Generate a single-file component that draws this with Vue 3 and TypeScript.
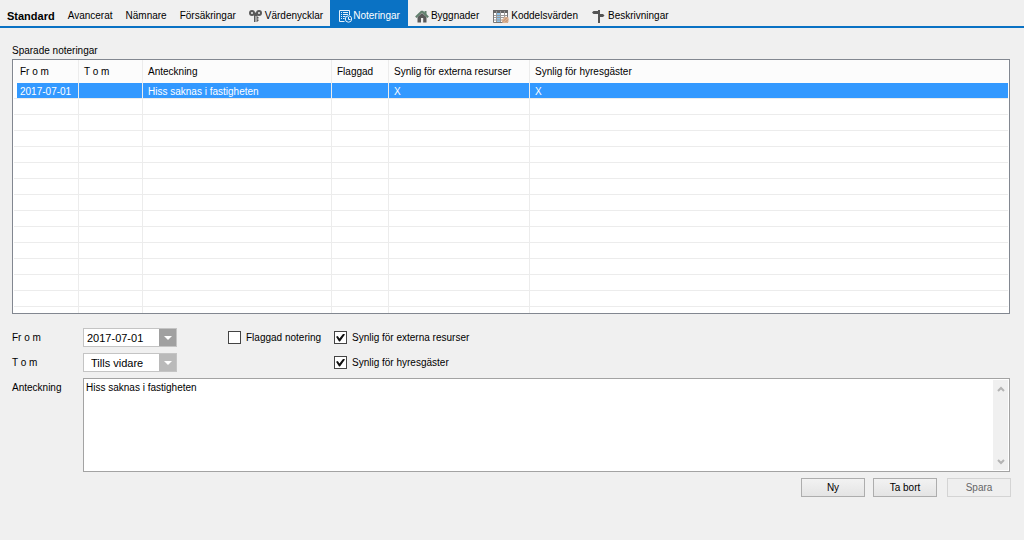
<script setup lang="ts">
import { ref } from 'vue'

interface Tab {
  label: string
  icon?: 'keys' | 'notes' | 'house' | 'grid' | 'sign'
}

interface Note {
  from: string
  to: string
  text: string
  flagged: string
  external: string
  tenants: string
}

const tabs: Tab[] = [
  { label: 'Standard' },
  { label: 'Avancerat' },
  { label: 'Nämnare' },
  { label: 'Försäkringar' },
  { label: 'Värdenycklar', icon: 'keys' },
  { label: 'Noteringar', icon: 'notes' },
  { label: 'Byggnader', icon: 'house' },
  { label: 'Koddelsvärden', icon: 'grid' },
  { label: 'Beskrivningar', icon: 'sign' },
]
const active = ref('Noteringar')

const columns = ['Fr o m', 'T o m', 'Anteckning', 'Flaggad', 'Synlig för externa resurser', 'Synlig för hyresgäster']
const notes: Note[] = [
  { from: '2017-07-01', to: '', text: 'Hiss saknas i fastigheten', flagged: '', external: 'X', tenants: 'X' },
]
const emptyRows = 14

const fromDate = ref('2017-07-01')
const toDate = ref('Tills vidare')
const flagged = ref(false)
const external = ref(true)
const tenants = ref(true)
const noteText = ref('Hiss saknas i fastigheten')
</script>

<template>
  <main class="window">
    <nav class="tabs">
      <button
        v-for="tab in tabs"
        :key="tab.label"
        type="button"
        class="tab"
        :class="{ active: tab.label === active, strong: tab.label === 'Standard', pictured: tab.icon }"
        @click="active = tab.label"
      >
        <svg v-if="tab.icon === 'keys'" class="icon" viewBox="0 0 14 14">
          <g fill="none" stroke="#5a5a5a" stroke-width="2">
            <circle cx="3" cy="4" r="2" />
            <circle cx="10" cy="4" r="2" />
          </g>
          <path d="M4.500 3.500h4V13H7.500V7H6.500v6H5V6z" fill="#5a5a5a" />
          <path d="M8 8h1.500v1.500H8zM8 10.500h1.500V12H8z" fill="#5a5a5a" />
        </svg>
        <svg v-else-if="tab.icon === 'notes'" class="icon" viewBox="0 0 14 14">
          <g fill="none" stroke="#e6f1fa" stroke-width="1">
            <path d="M5.500 12.500H.5V1.500h10V6" />
            <path d="M2 3.500h1M4 3.500h5M2 5.500h1M4 5.500h5M2 7.500h1M4 7.500h2.500M2 9.500h1M4 9.500h1.500" />
            <circle cx="9.500" cy="10" r="3.200" />
            <path d="M9.500 8v2.500h2" />
          </g>
        </svg>
        <svg v-else-if="tab.icon === 'house'" class="icon" viewBox="0 0 14 14">
          <path d="M2.500 8L7 4l4.500 4v5.500h-9z" fill="#5a5a5a" />
          <path d="M7 2.200L.8 8.300M7 2.200l6.200 6.100" fill="none" stroke="#62806e" stroke-width="2" />
          <path d="M9.500 2h2v4l-2-2z" fill="#62806e" />
          <path d="M6 9h2.200v5H6z" fill="#f0f0f0" />
        </svg>
        <svg v-else-if="tab.icon === 'grid'" class="icon wide" viewBox="0 0 16 14">
          <path d="M.5 1.500h14v12H.5z" fill="#fff" stroke="#777" />
          <path d="M0 1h15v3H0z" fill="#666" />
          <path d="M4 4h3v9H4z" fill="#8fc3ea" />
          <path d="M1 6.500h13M1 8.500h13M1 11h13M3.500 2v11M7.500 2v11M11.500 2v11" stroke="#999" stroke-width="1" />
          <path d="M8.500 11l3.500-3.500 3.500 1V13l-1.500 1H9.500z" fill="#dcb496" />
          <path d="M10 12.500l4-4M12.500 13l2.500-2.500" stroke="#b98a68" />
        </svg>
        <svg v-else-if="tab.icon === 'sign'" class="icon" viewBox="0 0 14 14">
          <path d="M6 1h2v13H6z" fill="#555" />
          <path d="M0 3.500L1.500 2H6v3H1.500z" fill="#555" />
          <path d="M8 5h3l1.500 1.500L11 8H8z" fill="#555" />
        </svg>
        <span>{{ tab.label }}</span>
      </button>
    </nav>

    <section class="content">
      <h2 class="caption" id="saved-notes">Sparade noteringar</h2>
      <div class="list">
        <table aria-labelledby="saved-notes">
          <colgroup>
            <col class="c-from" />
            <col class="c-to" />
            <col class="c-text" />
            <col class="c-flag" />
            <col class="c-ext" />
            <col />
          </colgroup>
          <thead>
            <tr>
              <th v-for="c in columns" :key="c" scope="col">{{ c }}</th>
            </tr>
          </thead>
          <tbody>
            <tr v-for="(n, i) in notes" :key="i" class="selected">
              <td>{{ n.from }}</td>
              <td>{{ n.to }}</td>
              <td>{{ n.text }}</td>
              <td>{{ n.flagged }}</td>
              <td>{{ n.external }}</td>
              <td>{{ n.tenants }}</td>
            </tr>
            <tr v-for="r in emptyRows" :key="'e' + r">
              <td v-for="c in columns" :key="c"></td>
            </tr>
          </tbody>
        </table>
      </div>

      <form class="form" @submit.prevent>
        <label for="from">Fr o m</label>
        <div class="fields">
          <span class="combo">
            <input id="from" v-model="fromDate" type="text" />
            <button type="button" class="drop" aria-label="Välj datum">
              <svg viewBox="0 0 8 4"><path d="M0 0h8L4 4z" fill="#fff" /></svg>
            </button>
          </span>
          <label class="check"><input v-model="flagged" type="checkbox" />Flaggad notering</label>
          <label class="check"><input v-model="external" type="checkbox" />Synlig för externa resurser</label>
        </div>

        <label for="to">T o m</label>
        <div class="fields">
          <span class="combo light">
            <input id="to" v-model="toDate" type="text" />
            <button type="button" class="drop" aria-label="Välj datum">
              <svg viewBox="0 0 8 4"><path d="M0 0h8L4 4z" fill="#fff" /></svg>
            </button>
          </span>
          <label class="check last"><input v-model="tenants" type="checkbox" />Synlig för hyresgäster</label>
        </div>

        <label for="note" class="top">Anteckning</label>
        <div class="memo">
          <textarea id="note" v-model="noteText"></textarea>
          <div class="scroll">
            <button type="button" aria-label="Upp">
              <svg viewBox="0 0 8 6"><path d="M1 5l3-3 3 3" /></svg>
            </button>
            <button type="button" aria-label="Ned">
              <svg viewBox="0 0 8 6"><path d="M1 1l3 3 3-3" /></svg>
            </button>
          </div>
        </div>
      </form>

      <div class="actions">
        <button type="button">Ny</button>
        <button type="button">Ta bort</button>
        <button type="button" class="spara" disabled>Spara</button>
      </div>
    </section>
  </main>
</template>

<style>
html,
body {
  background: #f0f0f0;
}
</style>

<style scoped>
.window {
  font: 10px/16px 'Liberation Sans', Arial, sans-serif;
  color: #000;
  min-height: 100vh;
}
button,
input,
textarea {
  font: inherit;
  color: inherit;
  box-sizing: border-box;
  margin: 0;
}
.tabs {
  display: flex;
  height: 26px;
  border-bottom: 2px solid #0a72c4;
}
.tab {
  display: flex;
  align-items: center;
  gap: 2px;
  border: 0;
  background: none;
  padding: 5px 6px 0 7px;
  white-space: nowrap;
}
.tab.pictured {
  padding-right: 7px;
}
.tab.strong {
  font: bold 11px/16px 'Liberation Sans', Arial, sans-serif;
}
.tab.active {
  gap: 0;
  padding: 5px 8px 0 9px;
  background: #0a72c4;
  color: #fff;
}
.icon {
  width: 14px;
  height: 14px;
  flex: none;
}
.icon.wide {
  width: 16px;
}
.content {
  padding: 15px 14px 0 12px;
}
.caption {
  font: inherit;
  margin: 0;
}
.list {
  height: 253px;
  border: 1px solid #828790;
  background: #fff;
  overflow: hidden;
  padding: 0 1px;
}
table {
  width: 100%;
  table-layout: fixed;
  border-collapse: separate;
  border-spacing: 0;
}
.c-from { width: 65px; }
.c-to { width: 64px; }
.c-text { width: 189px; }
.c-flag { width: 57px; }
.c-ext { width: 141px; }
th,
td {
  box-sizing: border-box;
  padding: 0 5px;
  font-weight: normal;
  text-align: left;
  white-space: nowrap;
  border-right: 1px solid #ececec;
}
th {
  height: 23px;
  padding-top: 1px;
  background: #fcfcfc;
}
td {
  height: 16px;
  padding-top: 2px;
  line-height: 13px;
  border-bottom: 1px solid #ececec;
}
th:last-child,
td:last-child {
  border-right: 0;
}
th:first-child,
td:first-child {
  padding-left: 6px;
}
.selected td {
  background: #3399ff;
  color: #fff;
}
.selected td:first-child {
  background: linear-gradient(to right, #fff 3px, #3399ff 3px);
}
.form {
  display: grid;
  grid-template-columns: 71px 1fr;
  row-gap: 6px;
  align-items: center;
  margin-top: 14px;
}
.fields {
  display: flex;
}
.combo {
  display: flex;
  width: 94px;
  height: 19px;
  box-sizing: border-box;
  border: 1px solid #c4c4c4;
  background: #fff;
}
.combo input {
  flex: 1;
  min-width: 0;
  border: 0;
  padding: 0 3px;
  background: none;
  outline: 0;
  font-size: 11px;
}
.combo.light input {
  padding-left: 7px;
}
.drop {
  display: flex;
  align-items: center;
  justify-content: center;
  width: 17px;
  border: 0;
  padding: 0;
  background: #a0a0a0;
}
.light .drop {
  background: #bababa;
}
.drop svg {
  width: 8px;
  height: 4px;
}
.check {
  display: flex;
  align-items: center;
  gap: 5px;
  white-space: nowrap;
}
.combo + .check {
  width: 106px;
  margin-left: 51px;
}
.combo + .check.last {
  margin-left: 157px;
}
.check input {
  appearance: none;
  flex: none;
  width: 13px;
  height: 13px;
  border: 1px solid #444;
  background: #fff;
}
.check input:checked {
  display: grid;
  place-items: center;
}
.check input:checked::before {
  content: '';
  width: 9px;
  height: 8px;
  background: #111;
  clip-path: polygon(0 42%, 20% 32%, 38% 62%, 82% 0, 100% 12%, 44% 100%, 34% 100%);
}
.top {
  align-self: start;
  padding-top: 2px;
}
.memo {
  display: flex;
  height: 94px;
  box-sizing: border-box;
  border: 1px solid #a3a3a3;
  background: #fff;
}
.memo textarea {
  flex: 1;
  border: 0;
  padding: 1px 2px;
  resize: none;
  outline: 0;
  background: none;
  overflow: hidden;
}
.scroll {
  width: 15px;
  margin: 1px;
  display: flex;
  flex-direction: column;
  justify-content: space-between;
  background: #f0f0f0;
}
.scroll button {
  display: flex;
  align-items: center;
  justify-content: center;
  height: 17px;
  padding: 0;
  border: 0;
  background: none;
}
.scroll svg {
  width: 8px;
  height: 6px;
  fill: none;
  stroke: #b4b4b4;
  stroke-width: 2;
}
.actions {
  display: flex;
  justify-content: flex-end;
  gap: 8px;
  margin: 6px -1px 0 0;
}
.actions button {
  width: 64px;
  height: 19px;
  padding: 0;
  border: 1px solid #adadad;
  background: linear-gradient(#f2f2f2, #e4e4e4);
}
.actions .spara {
  margin-left: 2px;
  border-color: #d4d4d4;
  background: #efefef;
  color: #666;
}
</style>
